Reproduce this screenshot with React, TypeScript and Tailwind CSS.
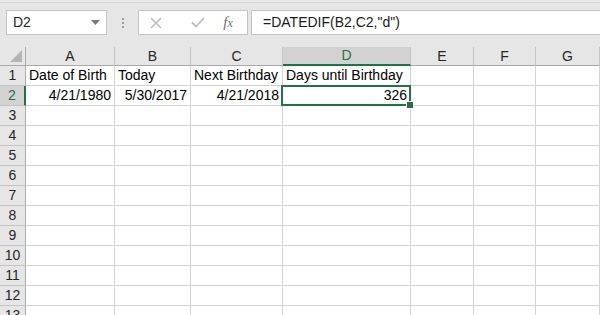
import React from "react";

const cols = ["A", "B", "C", "D", "E", "F", "G"];
const data: Record<string, { v: string; right?: boolean }> = {
  A1: { v: "Date of Birth" },
  B1: { v: "Today" },
  C1: { v: "Next Birthday" },
  D1: { v: "Days until Birthday" },
  A2: { v: "4/21/1980", right: true },
  B2: { v: "5/30/2017", right: true },
  C2: { v: "4/21/2018", right: true },
  D2: { v: "326", right: true },
};

export default function App() {
  const rows = Array.from({ length: 13 }, (_, i) => i + 1);
  return (
    <div
      className="w-[600px] h-[315px] overflow-hidden bg-white text-black"
      style={{ fontFamily: '"Liberation Sans", Arial, sans-serif' }}
    >
      {/* Toolbar */}
      <div className="h-[47px] bg-[#e6e6e6] flex flex-col">
        <div className="h-[3px] border-b border-[#d6d6d6] bg-[#e9e9e9]" />
        <div className="flex items-start pt-[7px] pl-[6px]">
          <div className="w-[101px] h-[25px] bg-white border border-[#c6c6c6] flex items-center pl-[6px] pr-[6px] justify-between">
            <span className="text-[14px] text-[#262626]">D2</span>
            <svg width="9" height="5" viewBox="0 0 9 5">
              <path d="M0 0 H9 L4.5 5 Z" fill="#777" />
            </svg>
          </div>
          <div className="w-[31px] h-[25px] flex flex-col items-center justify-center gap-[2px]">
            <div className="w-[2px] h-[2px] bg-[#a0a0a0]" />
            <div className="w-[2px] h-[2px] bg-[#a0a0a0]" />
            <div className="w-[2px] h-[2px] bg-[#a0a0a0]" />
          </div>
          <div className="w-[110px] h-[25px] bg-white border border-[#c6c6c6] flex items-center">
            <div className="w-[30px] flex justify-center ml-[2px]">
              <svg width="12" height="12" viewBox="0 0 12 12">
                <path d="M1 1 L11 11 M11 1 L1 11" stroke="#bdbdbd" strokeWidth="1.6" />
              </svg>
            </div>
            <div className="w-[30px] flex justify-center ml-[12px]">
              <svg width="14" height="11" viewBox="0 0 14 11">
                <path d="M1 5.5 L5 9.5 L13 1" stroke="#bdbdbd" strokeWidth="1.8" fill="none" />
              </svg>
            </div>
            <div className="w-[30px] flex justify-center">
              <span
                className="text-[15px] italic text-[#6e6e6e]"
                style={{ fontFamily: '"Liberation Serif", "Times New Roman", serif' }}
              >
                f<span className="text-[12px]">x</span>
              </span>
            </div>
          </div>
          <div className="ml-[3px] flex-1 h-[25px] bg-white border border-[#c6c6c6] border-r-0 flex items-center pl-[11px]">
            <span className="text-[14px] text-[#1a1a1a]">=DATEDIF(B2,C2,"d")</span>
          </div>
        </div>
      </div>

      {/* Sheet */}
      <div className="grid grid-cols-[26px_89px_76px_92px_128px_63px_62px_1fr] grid-rows-[19px] auto-rows-[20px] relative">
        {/* Corner */}
        <div className="bg-[#e6e6e6] border-r border-b border-[#ababab] flex items-end justify-end pr-[3px] pb-[3px]">
          <svg width="12" height="12" viewBox="0 0 12 12">
            <path d="M12 0 V12 H0 Z" fill="#b4b4b4" />
          </svg>
        </div>
        {cols.map((c) =>
          c === "D" ? (
            <div
              key={c}
              className="bg-[#d2d2d2] border-r border-[#c4c4c4] border-b-2 border-b-[#217346] flex items-center justify-center text-[14px] text-[#217346]"
            >
              {c}
            </div>
          ) : (
            <div
              key={c}
              className="bg-[#e6e6e6] border-r border-[#c4c4c4] border-b border-b-[#ababab] flex items-center justify-center text-[14px] text-[#262626]"
            >
              {c}
            </div>
          )
        )}
        {rows.map((r) => (
          <React.Fragment key={r}>
            {r === 2 ? (
              <div className="bg-[#d2d2d2] border-r-2 border-r-[#217346] border-b border-b-[#c4c4c4] flex items-center justify-center text-[14px] text-[#217346]">
                {r}
              </div>
            ) : (
              <div className="bg-[#e6e6e6] border-r border-r-[#ababab] border-b border-b-[#c4c4c4] flex items-center justify-center text-[14px] text-[#262626]">
                {r}
              </div>
            )}
            {cols.map((c) => {
              const cell = data[`${c}${r}`];
              return (
                <div
                  key={c}
                  className={`border-r border-b border-[#d4d4d4] flex items-center whitespace-nowrap text-[14px] ${
                    cell?.right ? "justify-end pr-[3px]" : "justify-start pl-[3px]"
                  } ${c === "D" && r === 2 ? "relative" : ""}`}
                >
                  {cell?.v}
                  {c === "D" && r === 2 && (
                    <>
                      <div className="absolute left-[-2px] top-[-1px] right-[-1px] bottom-[-1px] border-2 border-[#217346] pointer-events-none" />
                      <div className="absolute right-[-4px] bottom-[-4px] w-[6px] h-[6px] bg-[#217346] border border-white box-content" />
                    </>
                  )}
                </div>
              );
            })}
          </React.Fragment>
        ))}
      </div>
    </div>
  );
}
